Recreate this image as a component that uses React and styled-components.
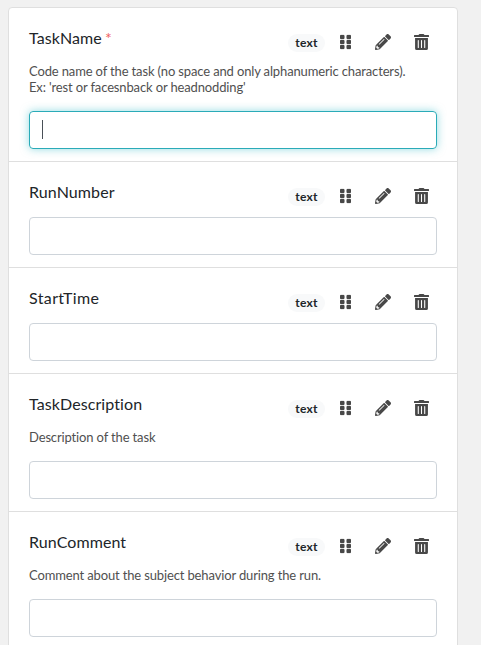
import React from "react";
import styled, { createGlobalStyle } from "styled-components";
import { FaGripVertical, FaPencilAlt, FaTrashAlt } from "react-icons/fa";

const GlobalStyle = createGlobalStyle`
  *, *::before, *::after { box-sizing: border-box; }
  html, body { margin: 0; height: 100%; overflow: hidden; }
  body {
    background: #f1f1f1;
    color: #212529;
    font-family: Lato, "Liberation Sans", sans-serif;
    font-size: 16px;
    line-height: 24px;
    font-variant-ligatures: none;
  }
`;

const Page = styled.main`
  padding: 7px 23px 0 8px;
`;

const Card = styled.section`
  background: #fff;
  border: 1px solid #dfdfdf;
  border-radius: 4px;
`;

const Field = styled.div`
  padding: 12px 20px;
  border-bottom: 1px solid #dfdfdf;
`;

const Header = styled.div`
  display: flex;
  justify-content: space-between;
  height: 43px;
`;

const Label = styled.label`
  padding-top: 6px;
  letter-spacing: ${({ $tracking = 0.09 }) => $tracking}px;
`;

const Required = styled.span`
  margin-left: -1px;
  color: #f0605c;
`;

const Actions = styled.div`
  display: flex;
  align-items: center;
  height: 44px;
  margin-right: -3px;
`;

const Badge = styled.span`
  width: 37px;
  height: 18px;
  margin: 2px 3px 0 0;
  border-radius: 9px;
  background: #f8f9fa;
  font-size: 12px;
  font-weight: 700;
  letter-spacing: 0.2px;
  line-height: 18px;
  text-align: center;
`;

const IconButton = styled.button`
  display: flex;
  align-items: center;
  justify-content: center;
  width: ${({ $width }) => $width}px;
  height: 38px;
  padding: 0;
  border: 0;
  background: none;
  color: #484848;
  font-size: 16px;
`;

const GripIcon = styled(FaGripVertical)`
  width: 11px;
  height: 16px;
  stroke: currentColor;
  stroke-width: 7px;
`;

const TrashIcon = styled(FaTrashAlt)`
  width: 15px;
  height: 16px;
`;

const Description = styled.p`
  margin: 0 0 16px;
  color: #505050;
  font-size: 13px;
  letter-spacing: -0.14px;
  line-height: 16px;
  white-space: pre-line;
`;

const TextBox = styled.input`
  display: block;
  width: 100%;
  height: 38px;
  padding: 6px 12px;
  border: 1px solid #ced4da;
  border-radius: 4px;
  background: #fff;
  color: #495057;
  font: inherit;
  outline: none;
`;

const FocusedBox = styled.div`
  display: flex;
  height: 38px;
  padding: 8px 12px;
  border: 1px solid #2aabb8;
  border-radius: 4px;
  box-shadow: 0 0 8px rgba(42, 184, 197, 0.5);
`;

const Caret = styled.span`
  width: 1px;
  height: 19px;
  background: #495057;
`;

const fields = [
  {
    name: "TaskName",
    required: true,
    focused: true,
    description:
      "Code name of the task (no space and only alphanumeric characters).\nEx: 'rest or facesnback or headnodding'",
  },
  { name: "RunNumber" },
  { name: "StartTime", tracking: 0.38 },
  { name: "TaskDescription", description: "Description of the task" },
  { name: "RunComment", description: "Comment about the subject behavior during the run." },
];

function FormField({ name, tracking, required, focused, description }) {
  return (
    <Field>
      <Header>
        <Label $tracking={tracking}>
          {name}
          {required && <Required> *</Required>}
        </Label>
        <Actions>
          <Badge>text</Badge>
          <IconButton $width={35} aria-label="Move"><GripIcon preserveAspectRatio="none" /></IconButton>
          <IconButton $width={40} aria-label="Edit"><FaPencilAlt /></IconButton>
          <IconButton $width={37} aria-label="Delete"><TrashIcon preserveAspectRatio="none" /></IconButton>
        </Actions>
      </Header>
      {description && <Description>{description}</Description>}
      {focused ? <FocusedBox><Caret /></FocusedBox> : <TextBox aria-label={name} />}
    </Field>
  );
}

export default function App() {
  return (
    <>
      <GlobalStyle />
      <Page>
        <Card>
          {fields.map((field) => <FormField key={field.name} {...field} />)}
        </Card>
      </Page>
    </>
  );
}
